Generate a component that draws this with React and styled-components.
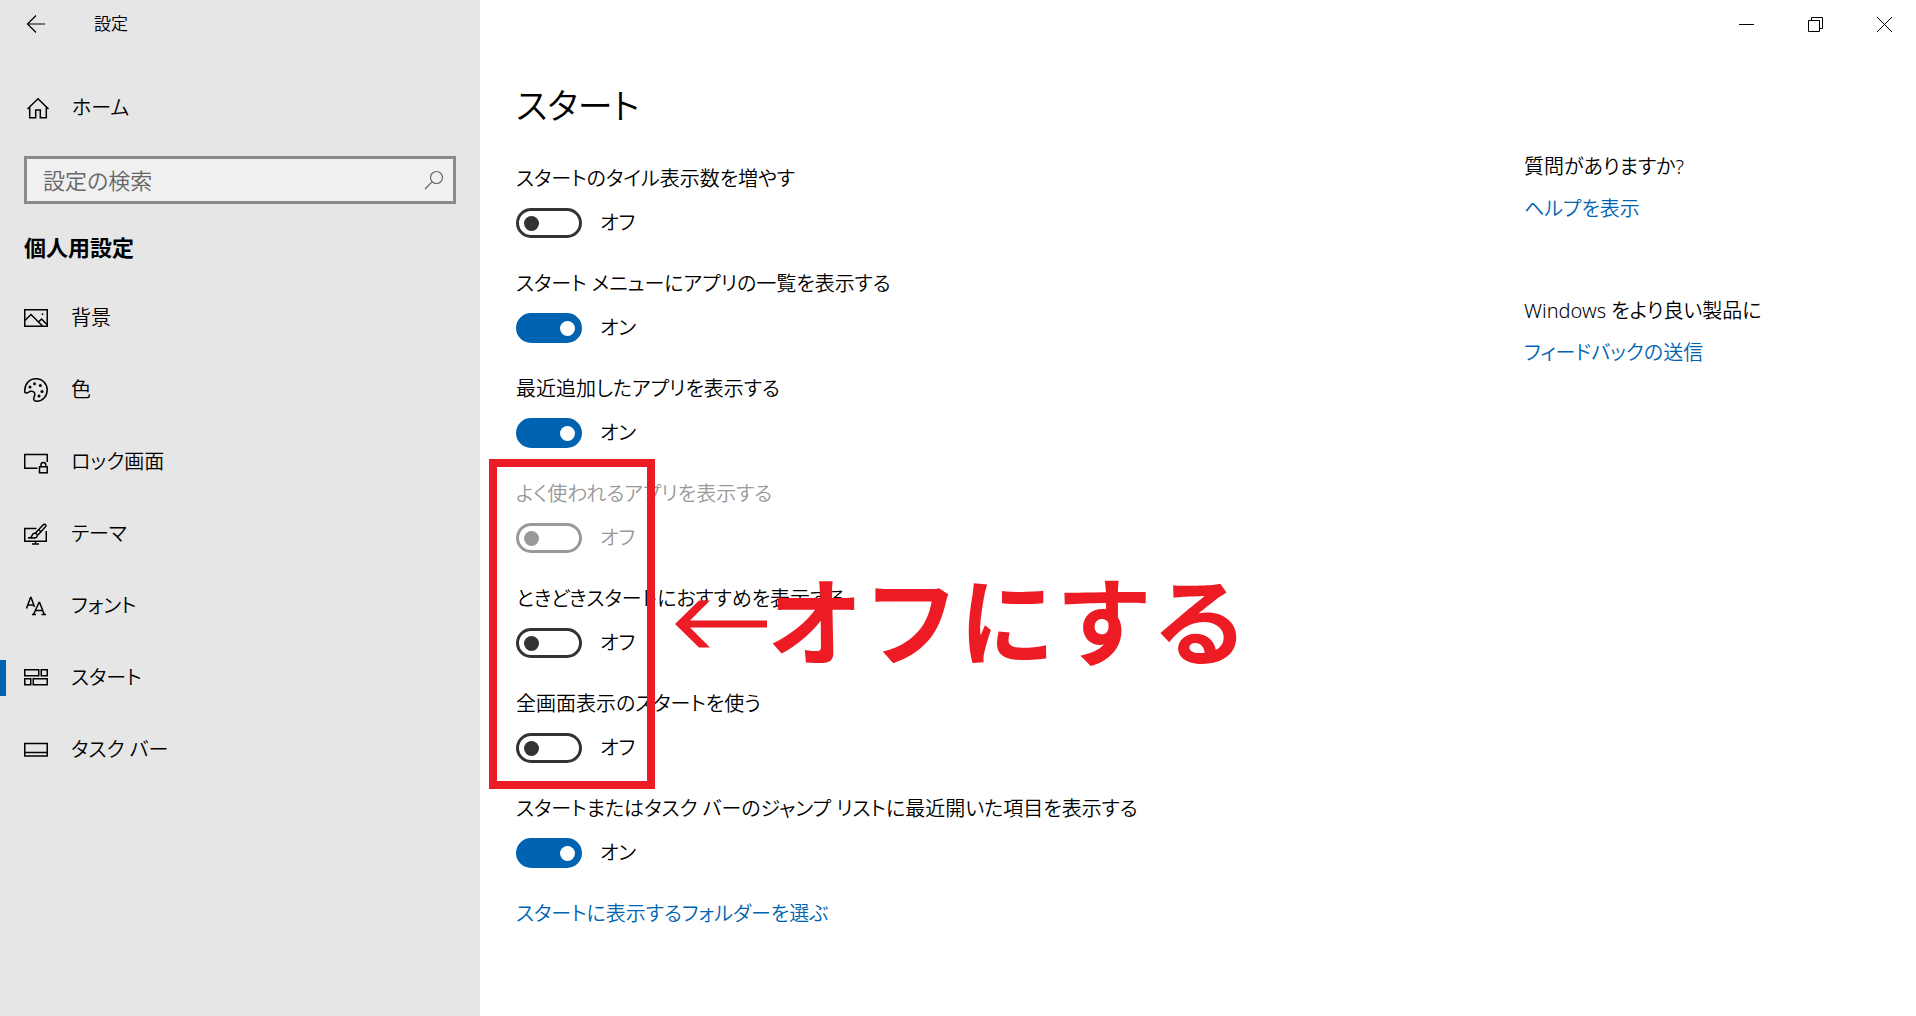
import { useState } from 'react'
import styled, { createGlobalStyle } from 'styled-components'

const GlobalStyle = createGlobalStyle`
  * {
    box-sizing: border-box;
  }
  body {
    margin: 0;
    background: #ffffff;
    color: #000000;
    font-family: 'Noto Sans', 'Noto Sans CJK JP', sans-serif;
    font-size: 20px;
    font-weight: 350;
    line-height: 32px;
    font-feature-settings: 'palt';
  }
  button, input {
    font: inherit;
    font-feature-settings: inherit;
    color: inherit;
  }
`

const Shell = styled.div`
  display: grid;
  grid-template-columns: 480px 1fr;
  min-height: 100vh;
`
const Sidebar = styled.aside`
  background: #e6e6e6;
`
const SidebarTop = styled.header`
  display: flex;
  align-items: center;
  height: 48px;
  gap: 22px;
`
const BackButton = styled.button`
  display: flex;
  align-items: center;
  justify-content: center;
  width: 72px;
  height: 48px;
  padding: 0;
  border: 0;
  background: transparent;
`
const AppTitle = styled.span`
  font-size: 17px;
`
const NavLink = styled.a`
  display: flex;
  align-items: center;
  gap: 23px;
  height: 36px;
  padding-left: 18px;
  border-left: 6px solid ${({ $active }) => ($active ? '#0063b1' : 'transparent')};
  color: #000000;
  text-decoration: none;
`
const HomeLink = styled(NavLink)`
  gap: 20px;
  margin-top: 42px;
`
const SearchBox = styled.label`
  display: flex;
  align-items: center;
  height: 48px;
  margin: 30px 24px 0;
  padding: 0 9px 0 16px;
  border: 3px solid #8a8a8a;
  background: #f0f0f0;
  color: #666666;
`
const SearchInput = styled.input`
  flex: 1;
  min-width: 0;
  padding: 0;
  border: 0;
  outline: none;
  background: transparent;
  color: #000000;
  font-size: 22px;
  &::placeholder {
    color: #666666;
    opacity: 1;
  }
`
const SidebarHeading = styled.h2`
  margin: 27px 24px 37px;
  font-size: 22px;
  font-weight: 700;
`
const NavList = styled.ul`
  display: flex;
  flex-direction: column;
  gap: 36px;
  margin: 0;
  padding: 0;
  list-style: none;
`
const Main = styled.main`
  min-width: 0;
`
const WindowBar = styled.div`
  display: flex;
  justify-content: flex-end;
  gap: 6px;
  height: 48px;
`
const WindowButton = styled.button`
  display: flex;
  align-items: center;
  justify-content: center;
  width: 63px;
  padding: 0;
  border: 0;
  background: transparent;
`
const Columns = styled.div`
  display: flex;
  padding-left: 36px;
`
const Settings = styled.section`
  flex: 1;
  min-width: 0;
`
const PageTitle = styled.h1`
  margin: 34px 0 33px;
  font-size: 35px;
  font-weight: 350;
  line-height: 48px;
`
const Stack = styled.div`
  display: flex;
  flex-direction: column;
  align-items: flex-start;
  gap: 30px;
`
const MarkedStack = styled(Stack)`
  position: relative;
`
const Setting = styled.div`
  color: ${({ $disabled }) => ($disabled ? '#999999' : '#000000')};
`
const SettingLabel = styled.label`
  display: block;
`
const SwitchRow = styled.div`
  display: flex;
  align-items: center;
  gap: 18px;
  height: 30px;
  margin-top: 13px;
`
const Switch = styled.input`
  appearance: none;
  display: flex;
  align-items: center;
  width: 66px;
  height: 30px;
  margin: 0;
  padding: 0 4px 0 5px;
  border: 3px solid #333333;
  border-radius: 15px;
  &::before {
    content: '';
    width: 15px;
    height: 15px;
    border-radius: 50%;
    background: #333333;
  }
  &:checked {
    justify-content: flex-end;
    border-color: #0063b1;
    background: #0063b1;
  }
  &:checked::before {
    background: #ffffff;
  }
  &:disabled {
    border-color: #999999;
  }
  &:disabled::before {
    background: #999999;
  }
`
const TextLink = styled.a`
  color: #0063b1;
  text-decoration: none;
`
const Frame = styled.div`
  position: absolute;
  top: -19px;
  bottom: -26px;
  left: -27px;
  width: 166px;
  border: 8px solid #ed1c24;
  pointer-events: none;
`
const Callout = styled.div`
  position: absolute;
  top: 93px;
  left: 159px;
  display: flex;
  align-items: center;
  color: #ed1c24;
  font-size: 96px;
  font-weight: 700;
  font-feature-settings: normal;
  line-height: 100px;
  white-space: nowrap;
  pointer-events: none;
`
const Help = styled.aside`
  display: flex;
  flex-direction: column;
  gap: 70px;
  width: 392px;
  padding-top: 103px;
`
const HelpBlock = styled.div`
  display: flex;
  flex-direction: column;
  align-items: flex-start;
  gap: 10px;
`
const HelpTitle = styled.p`
  margin: 0;
`

const Icon = ({ width = 24, height = 24, stroke = 1.5, children }) => (
  <svg
    width={width}
    height={height}
    viewBox={`0 0 ${width} ${height}`}
    fill="none"
    stroke="currentColor"
    strokeWidth={stroke}
    aria-hidden="true"
  >
    {children}
  </svg>
)

const BackIcon = () => (
  <Icon stroke={1.2}>
    <path d="M21 12H3.5M12 3.5L3.5 12l8.500 8.500" />
  </Icon>
)
const HomeIcon = () => (
  <Icon width={28}>
    <path d="M3.500 13L14 2.700 24.500 13M5.700 11v10.700h6V14h4.600v7.700h6V11" />
  </Icon>
)
const SearchIcon = () => (
  <Icon width={20} height={20} stroke={1.2}>
    <circle cx="12.500" cy="7.500" r="6" />
    <path d="M8.300 11.700L1 19" />
  </Icon>
)
const PictureIcon = () => (
  <Icon>
    <rect x="0.750" y="3.750" width="22.500" height="16.500" />
    <path d="M1 14.500l6-6 11.500 11.500M14.500 16l3-3 5.500 5.500" />
    <circle cx="18.500" cy="8.200" r="0.900" fill="currentColor" stroke="none" />
  </Icon>
)
const PaletteIcon = () => (
  <Icon>
    <path d="M0.800 13.800C0.300 6.200 5 0.800 12 0.800c6.500 0 11.200 4.800 11.200 11.200S18.500 23.200 13 23.200c-2.800 0-3.700-1.400-3.200-3.300.5-1.800 1.300-2.600 1-4.200-.4-2-2.300-2.900-4.300-2.400-1.500.4-2 1.400-3.400 1.600-1 .2-2.200-.2-2.300-1.100z" />
    <g fill="currentColor" stroke="none">
      <circle cx="6" cy="9" r="1.500" />
      <circle cx="10.500" cy="5.800" r="1.500" />
      <circle cx="16.300" cy="7.500" r="1.500" />
      <circle cx="18" cy="13.400" r="1.500" />
      <circle cx="15" cy="18" r="1.500" />
    </g>
  </Icon>
)
const LockScreenIcon = () => (
  <Icon>
    <path d="M13.500 18.200H0.750V4.500h22.500v7.500" />
    <rect x="15.500" y="16.800" width="7.700" height="6" />
    <path d="M17 16.800v-2a2.400 2.400 0 0 1 4.800 0v2" />
  </Icon>
)
const ThemeIcon = () => (
  <Icon>
    <path d="M12.500 6.500H0.750v12.700h21.500V9M11.500 19v3M8 22h7" />
    <path d="M11.500 11l7.500-8c1-1 2.300-1 2.700-.4.500.7.300 1.700-.5 2.400L14 13" />
    <path d="M4 15.800c3.500.3 3.500-1 4.300-2.900.8-1.900 3-2.200 4.200-1.100 1.200 1.200.9 3-.4 3.700-1.600.8-4 .5-8.100.3z" />
    <path d="M15 8l2.200 2" />
  </Icon>
)
const FontIcon = () => (
  <Icon>
    <path d="M2.500 14.500L6.500 3.500h.6l3.400 9.500M4 11h5.500" />
    <path d="M9.500 20.500L15 8.500h.6l4.700 12M11.300 16.500h7.300M8 20.500h4M17.500 20.500H22" />
  </Icon>
)
const StartIcon = () => (
  <Icon>
    <rect x="0.750" y="3.750" width="14" height="6" />
    <rect x="17.250" y="3.750" width="6" height="6" />
    <rect x="0.750" y="12.750" width="6" height="6" />
    <rect x="9.250" y="12.750" width="14" height="6" />
  </Icon>
)
const TaskbarIcon = () => (
  <Icon>
    <path d="M0.750 5.500h22.500v12.500H0.750zM0.750 14.500h22.500" />
  </Icon>
)
const MinimizeIcon = () => (
  <Icon width={15} height={15} stroke={1}>
    <path d="M0 7.500h15" />
  </Icon>
)
const RestoreIcon = () => (
  <Icon width={15} height={15} stroke={1}>
    <path d="M0.500 3.500h11v11h-11zM3.500 3.500v-3h11v11h-3" />
  </Icon>
)
const CloseIcon = () => (
  <Icon width={15} height={15} stroke={1}>
    <path d="M0 0l15 15M15 0L0 15" />
  </Icon>
)
const ArrowIcon = () => (
  <svg width="92" height="54" viewBox="0 -6 92 54" aria-hidden="true">
    <path
      d="M0 24L24 0.500h11L15 20.500h77v7H15L35 47.500H24z"
      fill="currentColor"
    />
  </svg>
)

const navItems = [
  { title: '背景', icon: <PictureIcon /> },
  { title: '色', icon: <PaletteIcon /> },
  { title: 'ロック画面', icon: <LockScreenIcon /> },
  { title: 'テーマ', icon: <ThemeIcon /> },
  { title: 'フォント', icon: <FontIcon /> },
  { title: 'スタート', icon: <StartIcon />, active: true },
  { title: 'タスク バー', icon: <TaskbarIcon /> },
]

const SwitchSetting = ({ id, title, defaultOn = false, disabled = false }) => {
  const [on, setOn] = useState(defaultOn)

  return (
    <Setting $disabled={disabled}>
      <SettingLabel htmlFor={id}>{title}</SettingLabel>
      <SwitchRow>
        <Switch
          id={id}
          type="checkbox"
          role="switch"
          checked={on}
          disabled={disabled}
          onChange={() => setOn(!on)}
        />
        <span>{on ? 'オン' : 'オフ'}</span>
      </SwitchRow>
    </Setting>
  )
}

export default function App() {
  return (
    <Shell>
      <GlobalStyle />
      <Sidebar>
        <SidebarTop>
          <BackButton aria-label="戻る">
            <BackIcon />
          </BackButton>
          <AppTitle>設定</AppTitle>
        </SidebarTop>
        <HomeLink href="#home">
          <HomeIcon />
          ホーム
        </HomeLink>
        <SearchBox>
          <SearchInput type="text" placeholder="設定の検索" aria-label="設定の検索" />
          <SearchIcon />
        </SearchBox>
        <SidebarHeading>個人用設定</SidebarHeading>
        <nav>
          <NavList>
            {navItems.map(({ title, icon, active }) => (
              <li key={title}>
                <NavLink href="#page" $active={active}>
                  {icon}
                  {title}
                </NavLink>
              </li>
            ))}
          </NavList>
        </nav>
      </Sidebar>
      <Main>
        <WindowBar>
          <WindowButton aria-label="最小化"><MinimizeIcon /></WindowButton>
          <WindowButton aria-label="元に戻す"><RestoreIcon /></WindowButton>
          <WindowButton aria-label="閉じる"><CloseIcon /></WindowButton>
        </WindowBar>
        <Columns>
          <Settings>
            <PageTitle>スタート</PageTitle>
            <Stack>
              <SwitchSetting id="tiles" title="スタートのタイル表示数を増やす" />
              <SwitchSetting id="apps" title="スタート メニューにアプリの一覧を表示する" defaultOn />
              <SwitchSetting id="recent" title="最近追加したアプリを表示する" defaultOn />
              <MarkedStack>
                <SwitchSetting id="most-used" title="よく使われるアプリを表示する" disabled />
                <SwitchSetting id="suggestions" title="ときどきスタートにおすすめを表示する" />
                <SwitchSetting id="fullscreen" title="全画面表示のスタートを使う" />
                <Frame />
                <Callout>
                  <ArrowIcon />
                  オフにする
                </Callout>
              </MarkedStack>
              <SwitchSetting
                id="jump-list"
                title="スタートまたはタスク バーのジャンプ リストに最近開いた項目を表示する"
                defaultOn
              />
              <TextLink href="#folders">スタートに表示するフォルダーを選ぶ</TextLink>
            </Stack>
          </Settings>
          <Help>
            <HelpBlock>
              <HelpTitle>質問がありますか?</HelpTitle>
              <TextLink href="#help">ヘルプを表示</TextLink>
            </HelpBlock>
            <HelpBlock>
              <HelpTitle>Windows をより良い製品に</HelpTitle>
              <TextLink href="#feedback">フィードバックの送信</TextLink>
            </HelpBlock>
          </Help>
        </Columns>
      </Main>
    </Shell>
  )
}
